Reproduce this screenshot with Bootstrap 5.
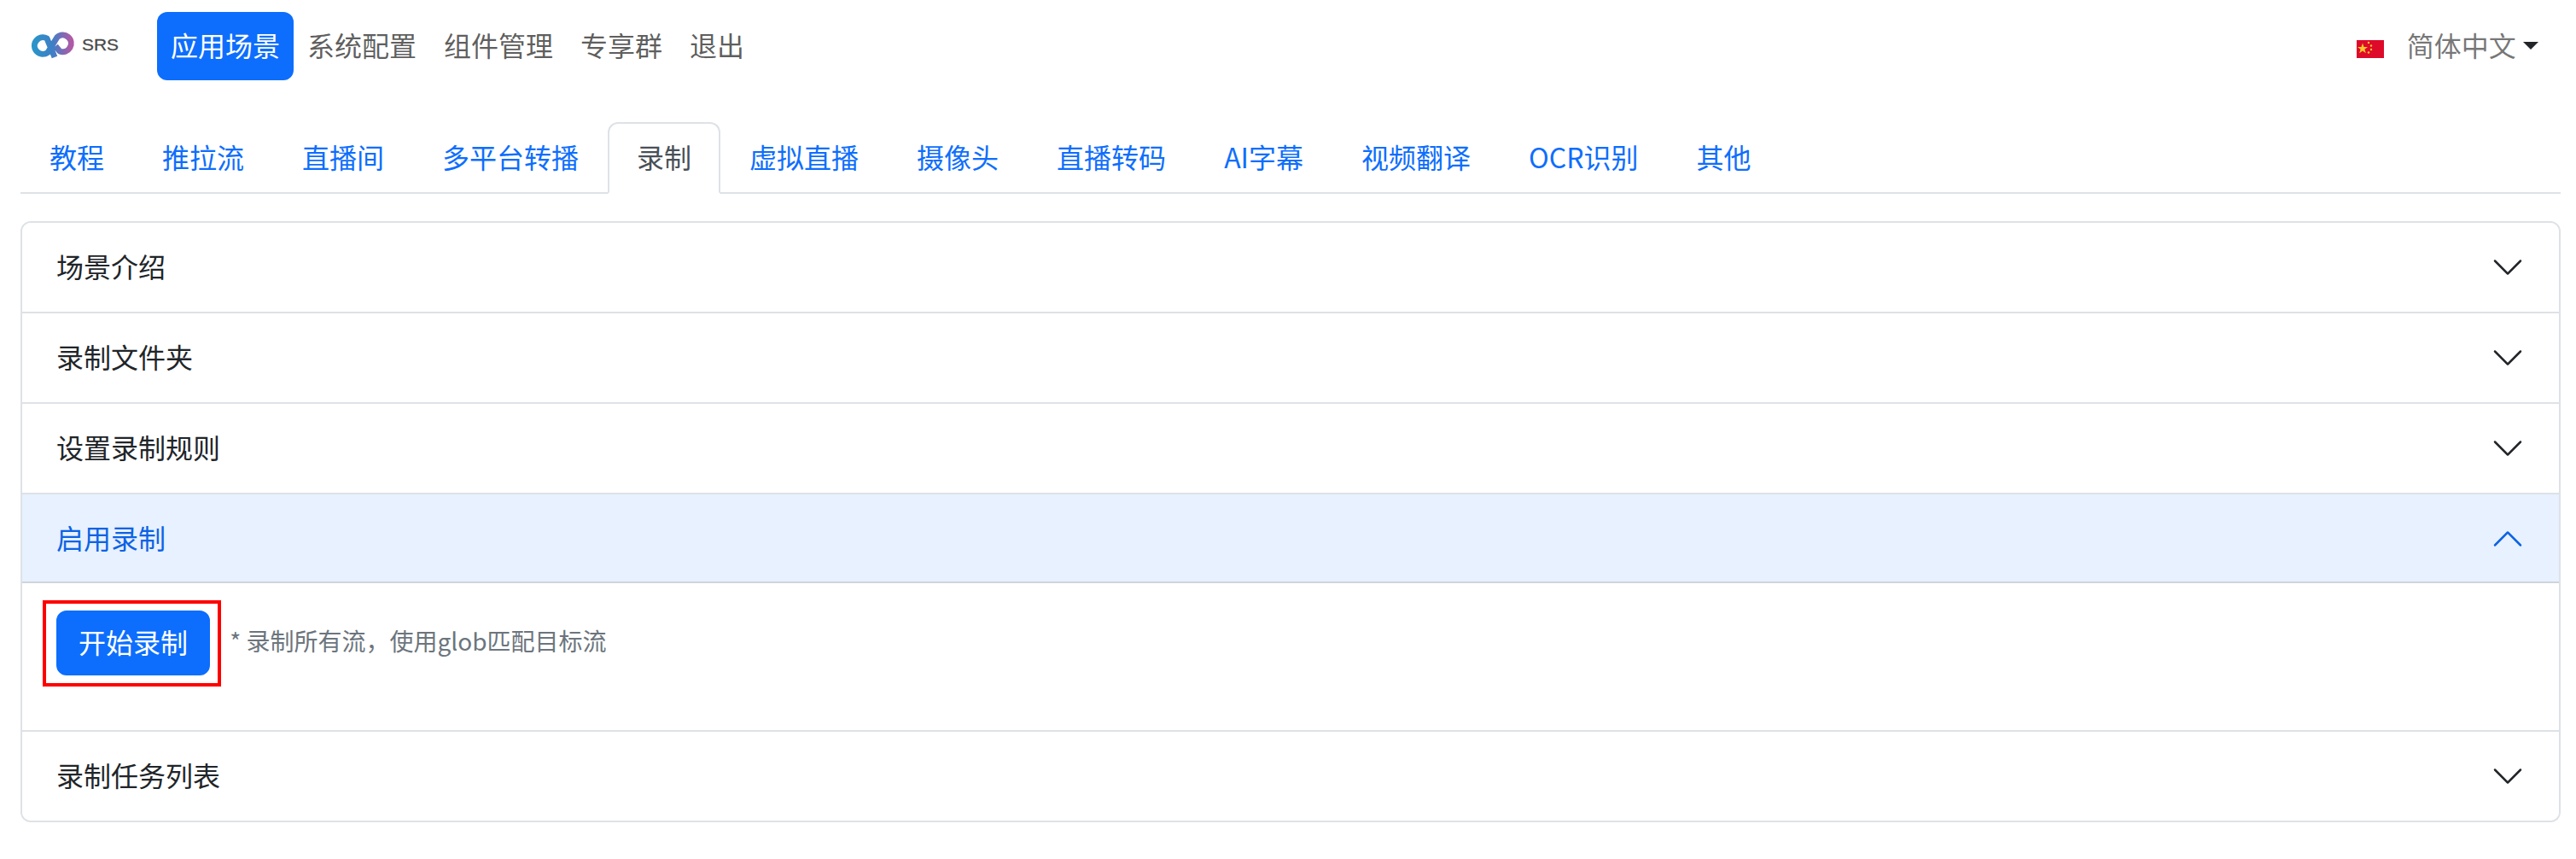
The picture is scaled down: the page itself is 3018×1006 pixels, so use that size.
<!DOCTYPE html>
<html lang="zh-CN">
<head>
    <meta charset="UTF-8">
    <meta name="viewport" content="width=device-width, initial-scale=1.0">
    <title>SRS Stack</title>
    <link href="https://cdn.jsdelivr.net/npm/bootstrap@5.3.0/dist/css/bootstrap.min.css" rel="stylesheet">
    <style>
        /* the screenshot is a 2x capture, so double every rem and border */
        html {
            font-size: 32px;
        }

        :root {
            --bs-border-width: 2px;
            --bs-body-font-family: "Noto Sans CJK SC", "Liberation Sans", sans-serif;
        }

        body {
            font-family: "Noto Sans CJK SC", "Liberation Sans", sans-serif;
        }

        /* Noto sits a little low in the line box, nudge the text up */
        .nav-link {
            padding-top: 14px;
            padding-bottom: 18px;
        }

        .top-bar {
            padding: 14px 28px 0 24px;
        }

        .top-bar .nav-pills .nav-link.active {
            color: #fff;
        }

        .brand-link {
            width: 160px;
            height: 80px;
            margin: 0;
            padding: 0 0 0 12px;
        }

        .srs-word {
            font-family: "Liberation Sans", sans-serif;
            font-size: 19px;
            fill: #484848;
            stroke: #484848;
            stroke-width: .3px;
        }

        .flag-box {
            width: 32px;
            height: 21px;
            margin-top: 7px;
        }

        .lang-toggle {
            color: #212529;
            padding-left: 27px;
            padding-right: 16px;
        }

        .lang-label {
            color: rgba(0, 0, 0, .55);
        }

        .page-body {
            padding: 49px 18px 0 24px;
        }

        .page-tabs .nav-link.active {
            color: #495057;
        }

        .page-accordion {
            margin-top: 32px;
            --bs-accordion-active-bg: #e7f1ff;
            --bs-accordion-active-color: #0c63e4;
            --bs-accordion-btn-active-icon: url("data:image/svg+xml,%3csvg xmlns='http://www.w3.org/2000/svg' viewBox='0 0 16 16' fill='%230c63e4'%3e%3cpath fill-rule='evenodd' d='M1.646 4.646a.5.5 0 0 1 .708 0L8 10.293l5.646-5.647a.5.5 0 0 1 .708.708l-6 6a.5.5 0 0 1-.708 0l-6-6a.5.5 0 0 1 0-.708z'/%3e%3c/svg%3e");
        }

        .page-accordion .accordion-button {
            padding-top: 29px;
            padding-bottom: 32px;
        }

        .page-accordion .accordion-button::after {
            margin-top: 3px;
        }

        .page-accordion .accordion-button:not(.collapsed) {
            box-shadow: inset 0 -2px 0 #cfd4dc;
        }

        .start-wrap {
            display: inline-block;
        }

        .start-btn {
            padding-top: 10px;
            padding-bottom: 14px;
        }

        .start-hint {
            color: #6c757d;
        }

        .red-frame {
            position: absolute;
            left: -16px;
            top: -12px;
            width: 209px;
            height: 101px;
            border: 4px solid #f00;
            pointer-events: none;
        }
    </style>
</head>
<body>

<nav class="navbar navbar-expand-lg top-bar">
    <a class="navbar-brand brand-link d-flex align-items-center" href="#">
        <svg width="110" height="40" viewBox="0 0 110 40">
            <defs>
                <linearGradient id="logoGrad" x1="0" y1="0" x2="1" y2="0">
                    <stop offset="0" stop-color="#2b93c9"/>
                    <stop offset=".5" stop-color="#3f7fc6"/>
                    <stop offset="1" stop-color="#b05aa6"/>
                </linearGradient>
            </defs>
            <path d="M28 33 L19 11 A9.8 9.8 0 1 0 20 27.5 L31 9.5 A9.8 9.8 0 1 1 34 26 L29 20" fill="none" stroke="url(#logoGrad)" stroke-width="7" stroke-linejoin="round"/>
            <text class="srs-word" x="60" y="25" textLength="43" lengthAdjust="spacingAndGlyphs">SRS</text>
        </svg>
    </a>
    <ul class="navbar-nav nav-pills flex-row">
        <li class="nav-item"><a class="nav-link active" href="#">应用场景</a></li>
        <li class="nav-item"><a class="nav-link" href="#">系统配置</a></li>
        <li class="nav-item"><a class="nav-link" href="#">组件管理</a></li>
        <li class="nav-item"><a class="nav-link" href="#">专享群</a></li>
        <li class="nav-item"><a class="nav-link" href="#">退出</a></li>
    </ul>
    <div class="ms-auto d-flex align-items-center">
        <svg class="flag-box" viewBox="0 0 32 21">
            <rect width="32" height="21" fill="#de0a2a"/>
            <polygon points="7,3.5 8.5,8 13,8 9.4,10.7 10.8,15.2 7,12.5 3.2,15.2 4.6,10.7 1,8 5.5,8" fill="#ffc72c"/>
            <circle cx="14" cy="3" r="1.2" fill="#ffc72c"/>
            <circle cx="17" cy="6.5" r="1.2" fill="#ffc72c"/>
            <circle cx="17" cy="11" r="1.2" fill="#ffc72c"/>
            <circle cx="14" cy="14.5" r="1.2" fill="#ffc72c"/>
        </svg>
        <div class="dropdown">
            <a class="nav-link dropdown-toggle lang-toggle" href="#" role="button" data-bs-toggle="dropdown"><span class="lang-label">简体中文</span></a>
            <ul class="dropdown-menu dropdown-menu-end">
                <li><a class="dropdown-item" href="#">简体中文</a></li>
                <li><a class="dropdown-item" href="#">English</a></li>
            </ul>
        </div>
    </div>
</nav>

<div class="page-body">
    <ul class="nav nav-tabs page-tabs">
        <li class="nav-item"><a class="nav-link" href="#">教程</a></li>
        <li class="nav-item"><a class="nav-link" href="#">推拉流</a></li>
        <li class="nav-item"><a class="nav-link" href="#">直播间</a></li>
        <li class="nav-item"><a class="nav-link" href="#">多平台转播</a></li>
        <li class="nav-item"><a class="nav-link active" href="#">录制</a></li>
        <li class="nav-item"><a class="nav-link" href="#">虚拟直播</a></li>
        <li class="nav-item"><a class="nav-link" href="#">摄像头</a></li>
        <li class="nav-item"><a class="nav-link" href="#">直播转码</a></li>
        <li class="nav-item"><a class="nav-link" href="#">AI字幕</a></li>
        <li class="nav-item"><a class="nav-link" href="#">视频翻译</a></li>
        <li class="nav-item"><a class="nav-link" href="#">OCR识别</a></li>
        <li class="nav-item"><a class="nav-link" href="#">其他</a></li>
    </ul>

    <div class="accordion page-accordion" id="recordAccordion">
        <div class="accordion-item">
            <h2 class="accordion-header"><button class="accordion-button collapsed" type="button" data-bs-toggle="collapse" data-bs-target="#secIntro">场景介绍</button></h2>
            <div id="secIntro" class="accordion-collapse collapse" data-bs-parent="#recordAccordion"><div class="accordion-body">场景介绍</div></div>
        </div>
        <div class="accordion-item">
            <h2 class="accordion-header"><button class="accordion-button collapsed" type="button" data-bs-toggle="collapse" data-bs-target="#secFolder">录制文件夹</button></h2>
            <div id="secFolder" class="accordion-collapse collapse" data-bs-parent="#recordAccordion"><div class="accordion-body">录制文件夹</div></div>
        </div>
        <div class="accordion-item">
            <h2 class="accordion-header"><button class="accordion-button collapsed" type="button" data-bs-toggle="collapse" data-bs-target="#secRules">设置录制规则</button></h2>
            <div id="secRules" class="accordion-collapse collapse" data-bs-parent="#recordAccordion"><div class="accordion-body">设置录制规则</div></div>
        </div>
        <div class="accordion-item">
            <h2 class="accordion-header"><button class="accordion-button" type="button" data-bs-toggle="collapse" data-bs-target="#secEnable">启用录制</button></h2>
            <div id="secEnable" class="accordion-collapse collapse show" data-bs-parent="#recordAccordion">
                <div class="accordion-body">
                    <p class="mb-3">
                        <span class="start-wrap position-relative">
                            <button type="button" class="btn btn-primary start-btn">开始录制</button>
                            <span class="red-frame"></span>
                        </span>
                        <span class="form-text start-hint ms-2">* 录制所有流，使用glob匹配目标流</span>
                    </p>
                </div>
            </div>
        </div>
        <div class="accordion-item">
            <h2 class="accordion-header"><button class="accordion-button collapsed" type="button" data-bs-toggle="collapse" data-bs-target="#secTasks">录制任务列表</button></h2>
            <div id="secTasks" class="accordion-collapse collapse" data-bs-parent="#recordAccordion"><div class="accordion-body">录制任务列表</div></div>
        </div>
    </div>
</div>

<script src="https://cdn.jsdelivr.net/npm/bootstrap@5.3.0/dist/js/bootstrap.bundle.min.js"></script>
</body>
</html>
